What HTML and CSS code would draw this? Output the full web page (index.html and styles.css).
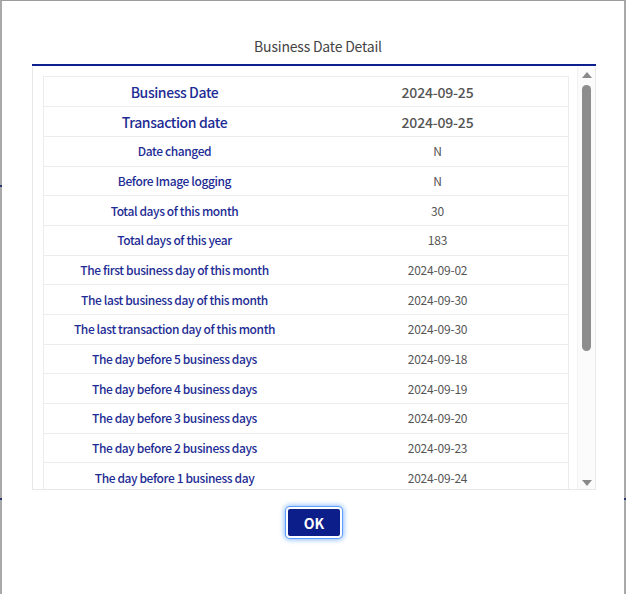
FILE: index.html
```html
<!DOCTYPE html>
<html>
<head>
<meta charset="utf-8">
<link rel="stylesheet" href="styles.css">
</head>
<body>
<div class="window">
  <span class="edge edge-l1"></span>
  <span class="edge edge-l2"></span>
  <span class="edge edge-r1"></span>
  <div class="title">Business Date Detail</div>
  <div class="rule"></div>
  <div class="panel">
    <div class="tablewrap">
      <table class="grid">
        <tr class="big"><td class="lbl">Business Date</td><td class="val">2024-09-25</td></tr>
        <tr class="big"><td class="lbl">Transaction date</td><td class="val">2024-09-25</td></tr>
        <tr><td class="lbl">Date changed</td><td class="val">N</td></tr>
        <tr><td class="lbl">Before Image logging</td><td class="val">N</td></tr>
        <tr><td class="lbl">Total days of this month</td><td class="val">30</td></tr>
        <tr><td class="lbl">Total days of this year</td><td class="val">183</td></tr>
        <tr><td class="lbl">The first business day of this month</td><td class="val">2024-09-02</td></tr>
        <tr><td class="lbl">The last business day of this month</td><td class="val">2024-09-30</td></tr>
        <tr><td class="lbl">The last transaction day of this month</td><td class="val">2024-09-30</td></tr>
        <tr><td class="lbl">The day before 5 business days</td><td class="val">2024-09-18</td></tr>
        <tr><td class="lbl">The day before 4 business days</td><td class="val">2024-09-19</td></tr>
        <tr><td class="lbl">The day before 3 business days</td><td class="val">2024-09-20</td></tr>
        <tr><td class="lbl">The day before 2 business days</td><td class="val">2024-09-23</td></tr>
        <tr><td class="lbl">The day before 1 business day</td><td class="val">2024-09-24</td></tr>
      </table>
    </div>
    <div class="scrollbar">
      <div class="arrow up"></div>
      <div class="track"><div class="thumb"></div></div>
      <div class="arrow down"></div>
    </div>
  </div>
  <div class="actions">
    <button class="ok">OK</button>
  </div>
</div>
</body>
</html>
```

FILE: styles.css
```css
html, body {
  margin: 0;
  padding: 0;
  background: #ffffff;
}
body {
  font-family: "Noto Sans CJK KR", "Noto Sans", sans-serif;
}
.window {
  position: relative;
  width: 626px;
  height: 594px;
  box-sizing: border-box;
  border-top: 1px solid #9c9c9c;
  border-left: 2px solid #a9a9a9;
  border-right: 2px solid #a9a9a9;
  padding: 0 28px 0 30px;
  background: #fff;
}
.edge {
  position: absolute;
  width: 2px;
  height: 2px;
  background: #2a3570;
}
.edge-l1 { left: -2px; top: 184px; }
.edge-l2 { left: -2px; top: 497px; }
.edge-r1 { right: -2px; top: 497px; }
.title {
  height: 63px;
  box-sizing: border-box;
  padding-top: 35px;
  padding-left: 8px;
  text-align: center;
  font-size: 14px;
  line-height: 20px;
  color: #444;
  letter-spacing: -0.2px;
}
.rule {
  height: 2px;
  background: #0d1f8f;
}
.panel {
  display: flex;
  height: 423px;
  box-sizing: border-box;
  border: 1px solid #e8e8e8;
  border-top: none;
  margin-top: 1px;
  overflow: hidden;
}
.tablewrap {
  flex: 1;
  padding: 9px 9px 0 10px;
  overflow: hidden;
}
.grid {
  width: 526px;
  border-collapse: collapse;
  table-layout: fixed;
}
.grid td {
  width: 50%;
  height: 28.67px;
  padding: 0;
  border: 1px solid #ececec;
  border-left: none;
  border-right: none;
  text-align: center;
  font-size: 12px;
  line-height: 16px;
  letter-spacing: -0.4px;
}
.grid td.lbl {
  border-left: 1px solid #ececec;
  color: #1d2c94;
  font-weight: 500;
}
.grid td.val {
  border-right: 1px solid #ececec;
  color: #555;
  padding-left: 2px;
  letter-spacing: -0.2px;
}
.grid tr.big td {
  font-size: 14px;
  height: 29px;
}
.grid tr.big td.val {
  font-weight: 500;
  color: #555;
}
.scrollbar {
  width: 17px;
  flex: none;
  display: flex;
  flex-direction: column;
  align-items: center;
  background: #fbfbfb;
  border-left: 1px solid #f2f2f2;
}
.arrow {
  width: 0;
  height: 0;
  border-left: 5px solid transparent;
  border-right: 5px solid transparent;
}
.arrow.up {
  margin-top: 5px;
  border-bottom: 6px solid #8a8a8a;
}
.arrow.down {
  margin-bottom: 3px;
  border-top: 6px solid #8a8a8a;
}
.track {
  flex: 1;
  width: 100%;
  display: flex;
  justify-content: center;
  padding-top: 7px;
}
.thumb {
  width: 9px;
  height: 266px;
  background: #8d8d8d;
  border-radius: 5px;
}
.actions {
  display: flex;
  justify-content: center;
  padding-top: 17px;
}
.ok {
  width: 56px;
  height: 31px;
  box-sizing: border-box;
  background: #0c1e8a;
  color: #fff;
  border: 2px solid #fff;
  border-radius: 4px;
  box-shadow: 0 0 0 1px #5f9cff, 0 0 5px 2px #8ebeff;
  font-family: "Noto Sans CJK KR", "Noto Sans", sans-serif;
  font-size: 14px;
  font-weight: 700;
  padding: 0;
}
```
